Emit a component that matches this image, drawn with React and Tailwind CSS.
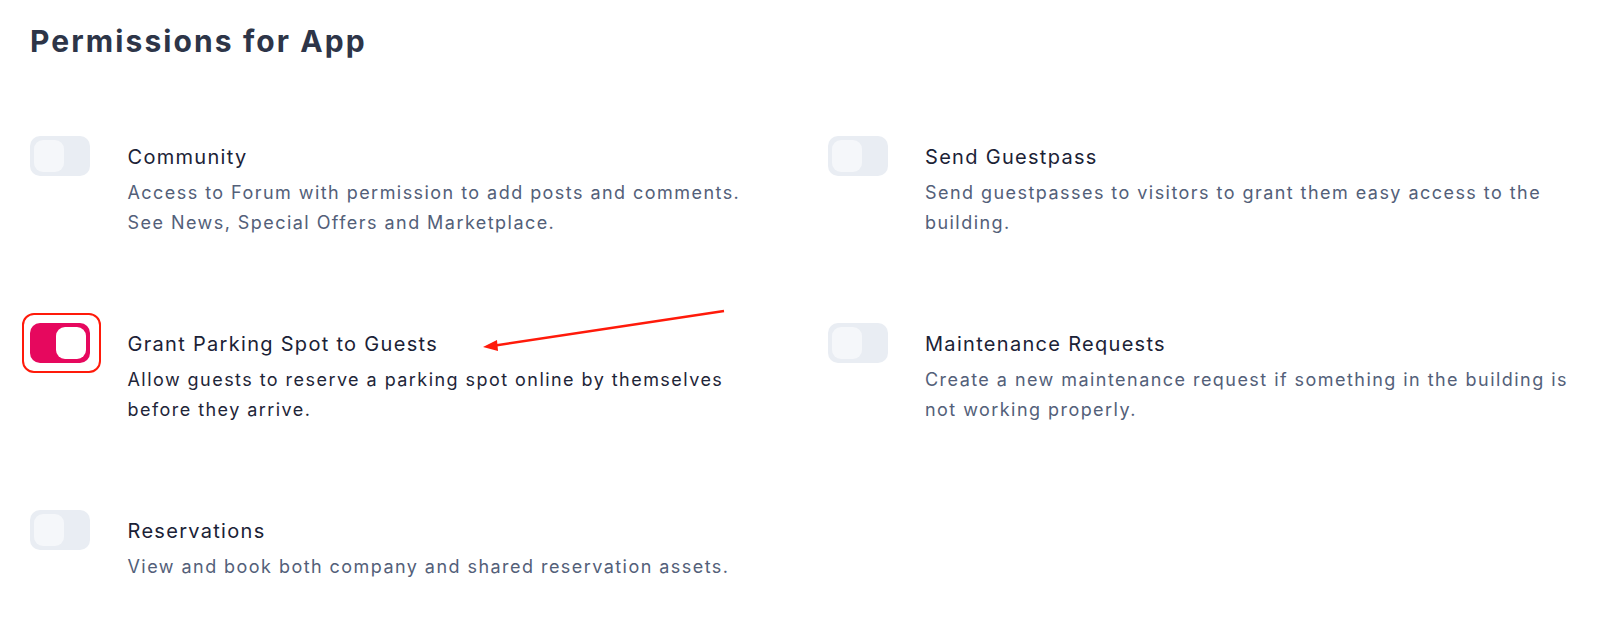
import React, { useState } from 'react';

const permissions = [
  {
    id: 'community',
    title: 'Community',
    lines: ['Access to Forum with permission to add posts and comments.', 'See News, Special Offers and Marketplace.'],
  },
  {
    id: 'guestpass',
    title: 'Send Guestpass',
    lines: ['Send guestpasses to visitors to grant them easy access to the', 'building.'],
  },
  {
    id: 'parking',
    title: 'Grant Parking Spot to Guests',
    lines: ['Allow guests to reserve a parking spot online by themselves', 'before they arrive.'],
    highlight: true,
  },
  {
    id: 'maintenance',
    title: 'Maintenance Requests',
    lines: ['Create a new maintenance request if something in the building is', 'not working properly.'],
  },
  {
    id: 'reservations',
    title: 'Reservations',
    lines: ['View and book both company and shared reservation assets.'],
  },
];

const Toggle = ({ checked, onChange }) => (
  <button
    type="button"
    onClick={onChange}
    className={`flex h-[40px] w-[60px] shrink-0 rounded-[10px] p-[4px] ${
      checked ? 'justify-end bg-[#e6085e]' : 'justify-start bg-[#e9edf3]'
    }`}
  >
    <span
      className={`block h-[32px] w-[30px] rounded-[9px] ${checked ? 'bg-white' : 'bg-[#f5f7fa]'}`}
    />
  </button>
);

const PermissionItem = ({ item, checked, onToggle }) => (
  <div className="flex items-start gap-[37.5px]">
    <div className="relative">
      <Toggle checked={checked} onChange={onToggle} />
      {/* annotation box */}
      {item.highlight && (
        <div className="pointer-events-none absolute left-[-8px] top-[-10px] h-[60px] w-[79px] rounded-[12px] border-2 border-[#ff1a0a]" />
      )}
    </div>
    <div className="relative whitespace-nowrap pt-[7px]">
      <div className="text-[20px] leading-[28px] tracking-[1.3px] text-[#1b2236]">{item.title}</div>
      <p
        className={`mt-[7px] text-[18px] leading-[30px] tracking-[1.45px] ${
          checked ? 'text-[#1e2538]' : 'text-[#536079]'
        }`}
      >
        {item.lines.map((line, i) => (
          <React.Fragment key={i}>
            {i > 0 && <br />}
            {line}
          </React.Fragment>
        ))}
      </p>
      {/* annotation arrow */}
      {item.highlight && (
        <svg
          className="pointer-events-none absolute left-[348px] top-[-19px]"
          width="260"
          height="60"
          viewBox="0 0 260 60"
        >
          <line x1="248" y1="7" x2="16" y2="42" stroke="#ff1a0a" strokeWidth="2.5" />
          <polygon points="7,43 21,36 22,47" fill="#ff1a0a" />
        </svg>
      )}
    </div>
  </div>
);

export default function App() {
  const [enabled, setEnabled] = useState({ parking: true });

  return (
    <div
      className="min-h-screen bg-white px-[30px] pt-[23px]"
      style={{ fontFamily: 'Inter, "Noto Sans", sans-serif' }}
    >
      <h1 className="text-[30px] font-bold leading-[36px] tracking-[2.1px] text-[#2d3548]">
        Permissions for App
      </h1>
      <div className="mt-[77px] grid grid-cols-2 gap-x-[55px] gap-y-[85px]">
        {permissions.map((item) => (
          <PermissionItem
            key={item.id}
            item={item}
            checked={!!enabled[item.id]}
            onToggle={() => setEnabled((s) => ({ ...s, [item.id]: !s[item.id] }))}
          />
        ))}
      </div>
    </div>
  );
}
